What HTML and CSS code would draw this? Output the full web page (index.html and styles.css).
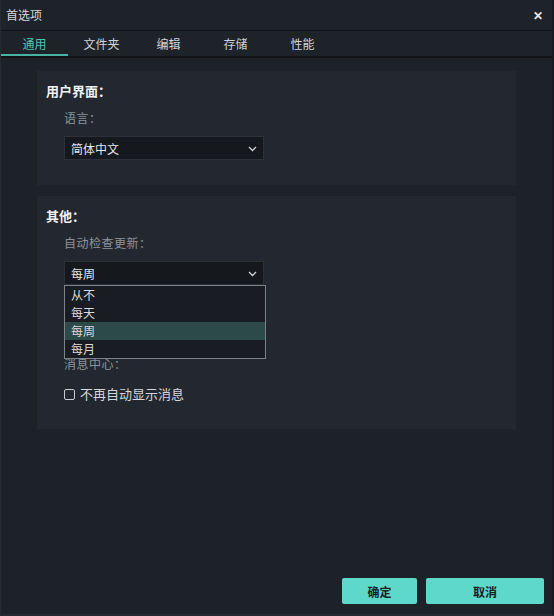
FILE: index.html
```html
<!DOCTYPE html>
<html lang="zh">
<head>
<meta charset="utf-8">
<title>首选项</title>
<link rel="stylesheet" href="styles.css">
</head>
<body>
<div class="window">
  <div class="titlebar">
    <span class="title">首选项</span>
    <span class="close">✕</span>
  </div>
  <div class="tabs">
    <div class="tab active">通用</div>
    <div class="tab">文件夹</div>
    <div class="tab">编辑</div>
    <div class="tab">存储</div>
    <div class="tab">性能</div>
  </div>
  <div class="content">
    <section class="panel panel-ui">
      <div class="heading">用户界面：</div>
      <div class="field">
        <div class="label">语言：</div>
        <div class="select">
          <span>简体中文</span>
          <svg class="chev" width="9" height="6" viewBox="0 0 9 6"><path d="M1 1l3.5 3.5L8 1" fill="none" stroke="#d0d3d8" stroke-width="1.3"/></svg>
        </div>
      </div>
    </section>
    <section class="panel panel-other">
      <div class="heading">其他：</div>
      <div class="field">
        <div class="label">自动检查更新：</div>
        <div class="select-wrap">
          <div class="select">
            <span>每周</span>
            <svg class="chev" width="9" height="6" viewBox="0 0 9 6"><path d="M1 1l3.5 3.5L8 1" fill="none" stroke="#d0d3d8" stroke-width="1.3"/></svg>
          </div>
          <ul class="dropdown">
            <li>从不</li>
            <li>每天</li>
            <li class="selected">每周</li>
            <li>每月</li>
          </ul>
        </div>
      </div>
      <div class="field msg">
        <div class="label">消息中心：</div>
        <label class="check"><span class="box"></span>不再自动显示消息</label>
      </div>
    </section>
  </div>
  <div class="footer">
    <button class="btn ok">确定</button>
    <button class="btn cancel">取消</button>
  </div>
</div>
</body>
</html>
```
FILE: styles.css
```css
* { box-sizing: border-box; }
html, body { margin: 0; padding: 0; }
body {
  width: 554px;
  height: 616px;
  background: #1d2128;
  font-family: "Noto Sans CJK SC", "Noto Sans", sans-serif;
  color: #d8dade;
  overflow: hidden;
}
.window {
  width: 554px;
  height: 616px;
  display: flex;
  flex-direction: column;
  background: #1d2128;
  border-left: 1px solid #262b33;
  border-right: 2px solid #171a1f;
  border-bottom: 2px solid #262b33;
}
.titlebar {
  height: 31px;
  display: flex;
  align-items: center;
  justify-content: space-between;
  padding: 0 9px 0 5px;
  background: #1e2229;
  border-bottom: 1px solid #101215;
}
.title { font-size: 12px; color: #d6d8dc; line-height: 1; }
.close { font-size: 12px; color: #e8e8e8; font-weight: bold; line-height: 1; }
.tabs {
  height: 27px;
  display: flex;
  border-bottom: 2px solid #111317;
  background: #1e2229;
}
.tab {
  width: 67px;
  font-size: 12px;
  color: #d0d3d8;
  text-align: center;
  line-height: 23px;
  padding-top: 1px;
  border-bottom: 2px solid transparent;
}
.tab.active { color: #4fc7b4; border-bottom-color: #46b3a3; }
.content {
  padding: 13px 36px 0 36px;
  display: flex;
  flex-direction: column;
  gap: 11px;
}
.panel {
  background: #232830;
  padding: 11px 9px 0 9px;
}
.panel-ui { height: 114px; }
.panel-other { height: 233px; }
.heading {
  font-size: 13px;
  font-weight: bold;
  color: #f0f1f3;
  line-height: 18px;
}
.field { padding-left: 18px; }
.label {
  font-size: 12px;
  color: #8d929a;
  line-height: 16px;
  margin-top: 10px;
  letter-spacing: 0.5px;
}
.select {
  width: 200px;
  height: 24px;
  margin-top: 10px;
  background: #15181d;
  border: 1px solid #2c3139;
  display: flex;
  align-items: center;
  justify-content: space-between;
  padding: 0 6px 0 6px;
  font-size: 12px;
  color: #e6e7ea;
}
.chev { margin-top: 1px; }
.select-wrap { position: relative; }
.dropdown {
  position: absolute;
  left: 0;
  top: 24px;
  width: 202px;
  margin: 0;
  padding: 0;
  list-style: none;
  background: #191c22;
  border: 1px solid #7d8289;
  z-index: 2;
}
.dropdown li {
  height: 18px;
  line-height: 18px;
  padding-left: 6px;
  font-size: 12px;
  color: #d8dade;
}
.dropdown li.selected { background: #2c4a48; }
.msg .label { margin-top: 71px; }
.check {
  display: flex;
  align-items: center;
  margin-top: 13px;
  font-size: 13px;
  color: #d4d6da;
  line-height: 18px;
}
.box {
  width: 11px;
  height: 11px;
  border: 1px solid #c8cbd0;
  border-radius: 2px;
  margin-right: 5px;
}
.footer {
  margin-top: auto;
  display: flex;
  justify-content: flex-end;
  gap: 9px;
  padding: 0 8px 10px 0;
}
.btn {
  height: 26px;
  border: none;
  border-radius: 2px;
  background: #5ed8ca;
  color: #1a1f25;
  font-family: "Noto Sans CJK SC", sans-serif;
  font-size: 12px;
  font-weight: bold;
  padding: 0;
}
.btn.ok { width: 75px; }
.btn.cancel { width: 118px; }
```
